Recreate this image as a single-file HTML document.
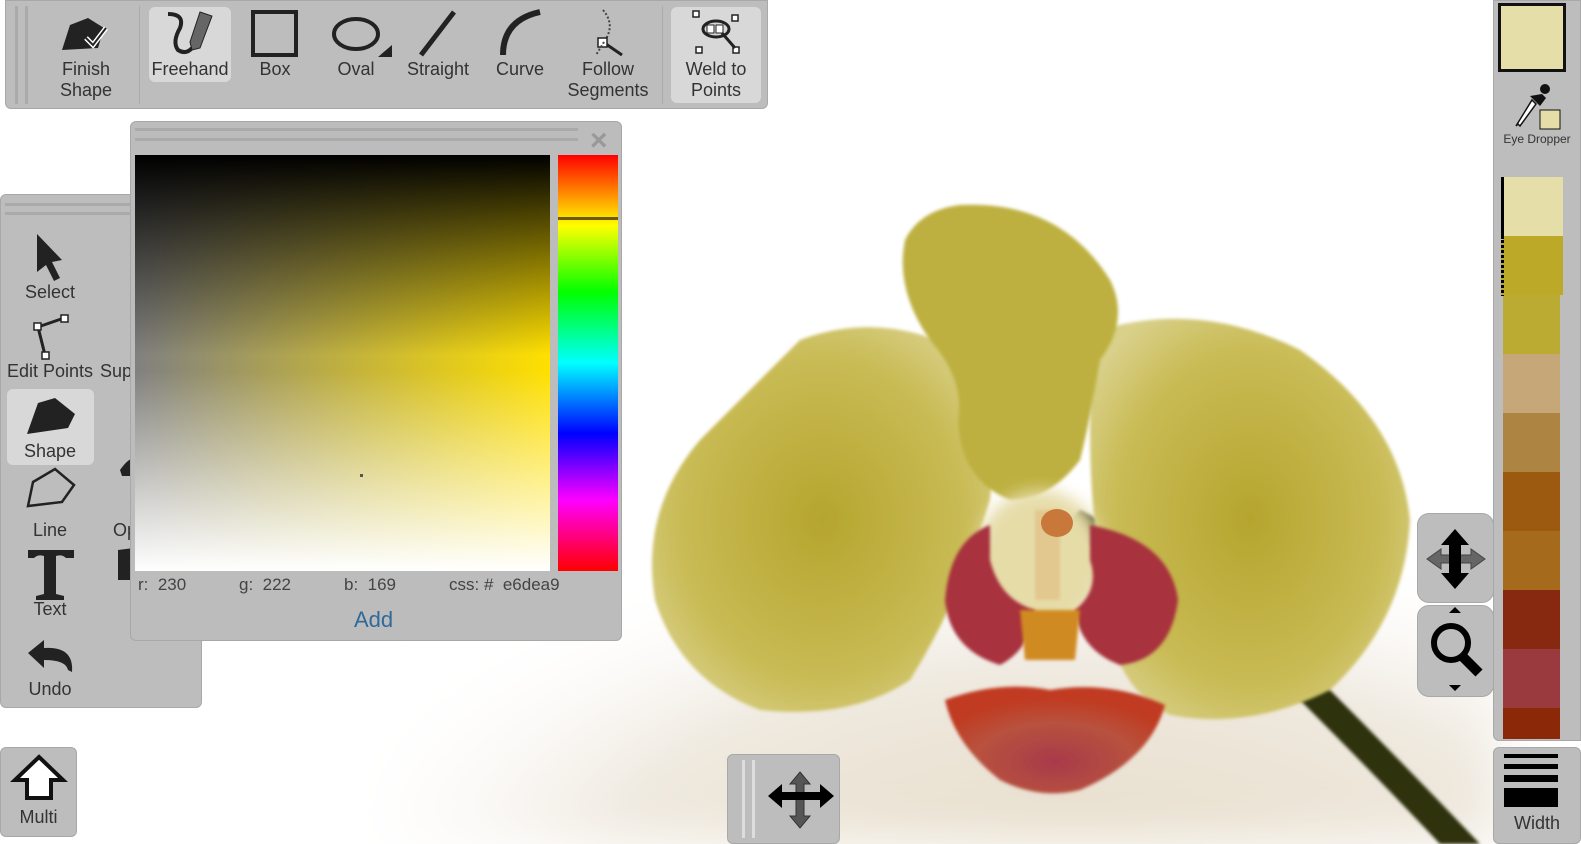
<!DOCTYPE html>
<html><head><meta charset="utf-8">
<style>
*{box-sizing:border-box;margin:0;padding:0}
html,body{width:1581px;height:844px;overflow:hidden}
body{position:relative;background:#fff;font-family:"Liberation Sans",Arial,sans-serif;color:#333}
.abs{position:absolute}
.panel{position:absolute;background:#bdbdbd;border:1px solid #a8a8a8;border-radius:6px}
.btn{position:absolute;text-align:center;font-size:18px;color:#333;line-height:21px}
.hl{background:#d8d8d8;border-radius:6px}
.grip{position:absolute;background:#aaa}
</style></head><body>
<svg class="abs" style="left:0;top:0" width="1581" height="844">
<defs>
<radialGradient id="bg" cx="0.62" cy="1.05" r="0.7">
<stop offset="0" stop-color="#e6dcc8"/><stop offset="0.6" stop-color="#efe9df"/><stop offset="1" stop-color="#fff" stop-opacity="0"/></radialGradient>
<filter id="b8"><feGaussianBlur stdDeviation="8"/></filter>
<filter id="b2"><feGaussianBlur stdDeviation="1.5"/></filter>
<filter id="b20"><feGaussianBlur stdDeviation="25"/></filter>
<radialGradient id="pet" cx="0.5" cy="0.5" r="0.6"><stop offset="0" stop-color="#b5a52e"/><stop offset="0.7" stop-color="#c9bb55"/><stop offset="1" stop-color="#d9d08a"/></radialGradient>
<radialGradient id="lip" cx="0.5" cy="0.7" r="0.6"><stop offset="0" stop-color="#a83a4a"/><stop offset="0.6" stop-color="#b8523e"/><stop offset="1" stop-color="#c03a20"/></radialGradient>
</defs>
<rect x="380" y="360" width="1120" height="484" fill="url(#bg)" filter="url(#b20)"/>
<path d="M1060 530 Q1200 600 1300 700 Q1380 780 1440 844 L1480 844 Q1400 760 1320 680 Q1200 570 1080 510Z" fill="#2e3010" filter="url(#b2)"/>
<path d="M800 340 Q880 310 960 350 Q1000 420 990 500 Q960 600 910 680 Q850 720 760 710 Q680 680 655 600 Q640 510 700 440 Q750 390 800 340Z" fill="url(#pet)" filter="url(#b2)"/>
<path d="M1100 330 Q1200 300 1300 350 Q1400 420 1410 520 Q1405 620 1330 690 Q1250 730 1170 715 Q1120 690 1110 630 Q1090 530 1090 430 Q1090 370 1100 330Z" fill="url(#pet)" filter="url(#b2)"/>
<path d="M960 205 Q1060 200 1110 280 Q1130 320 1100 360 Q1090 420 1080 460 Q1050 500 1010 500 Q960 480 958 420 Q965 380 930 340 Q895 290 905 240 Q920 210 960 205Z" fill="#bdb040" filter="url(#b2)"/>
<ellipse cx="1040" cy="560" rx="65" ry="70" fill="#e6dca8" filter="url(#b8)"/>
<path d="M990 525 Q950 540 945 600 Q950 650 1000 665 Q1030 650 1035 610 Q1000 600 990 560Z" fill="#a8333e" filter="url(#b2)"/>
<path d="M1090 525 Q1170 540 1178 600 Q1170 660 1120 665 Q1080 650 1075 610 Q1100 590 1090 560Z" fill="#a8333e" filter="url(#b2)"/>
<path d="M1035 510 L1060 510 L1060 600 L1035 600Z" fill="#e2c88e" filter="url(#b2)"/>
<ellipse cx="1057" cy="523" rx="16" ry="14" fill="#c8783a"/>
<path d="M1020 610 L1080 610 L1075 660 L1025 660Z" fill="#d08a20" filter="url(#b2)"/>
<path d="M945 700 Q1000 680 1050 690 Q1110 680 1165 705 Q1150 760 1080 790 Q1040 800 1000 780 Q955 745 945 700Z" fill="url(#lip)" filter="url(#b2)"/>
</svg>

<div class="panel" style="left:5px;top:0;width:763px;height:109px;border-radius:0 0 6px 6px"></div>
<div class="grip" style="left:15px;top:6px;width:3px;height:98px"></div>
<div class="grip" style="left:25px;top:6px;width:3px;height:98px"></div>
<div class="abs" style="left:139px;top:6px;width:1px;height:98px;background:#aaa"></div>
<div class="abs" style="left:662px;top:6px;width:1px;height:98px;background:#aaa"></div>
<div class="abs hl" style="left:149px;top:7px;width:82px;height:75px"></div>
<div class="abs hl" style="left:671px;top:7px;width:90px;height:96px"></div>
<svg class="abs" style="left:0;top:0" width="770" height="60">
<path d="M70 25 L88 18 L104 28 L98 48 L62 50Z" fill="#222"/><path d="M86 38 L93 45 L106 28" stroke="#fff" stroke-width="5" fill="none"/><path d="M86 38 L93 45 L106 28" stroke="#222" stroke-width="2" fill="none"/>
<path d="M168 14 Q185 14 180 28 Q172 42 178 50 Q186 55 192 48" stroke="#222" stroke-width="4" fill="none"/><path d="M200 12 L212 16 L200 48 L192 50 L190 42Z" fill="#666" stroke="#222" stroke-width="1"/>
<rect x="253" y="12" width="43" height="43" fill="none" stroke="#222" stroke-width="4"/>
<ellipse cx="356" cy="34" rx="22" ry="15" fill="none" stroke="#222" stroke-width="4"/><path d="M378 57 L392 45 L392 57Z" fill="#222"/>
<path d="M421 55 L454 12" stroke="#222" stroke-width="5"/>
<path d="M503 55 Q503 20 540 12" stroke="#222" stroke-width="6" fill="none"/>
<path d="M603 10 Q616 25 604 42" stroke="#444" stroke-width="2" stroke-dasharray="2 2" fill="none"/><path d="M603 42 L622 55" stroke="#222" stroke-width="3"/><rect x="598" y="38" width="9" height="9" fill="#fff" stroke="#222" stroke-width="1.5"/><path d="M604 42 L596 55" stroke="#444" stroke-width="2" stroke-dasharray="2 2"/>
<rect x="693" y="11" width="6" height="6" fill="#fff" stroke="#222" stroke-width="1.5"/><rect x="732" y="15" width="6" height="6" fill="#fff" stroke="#222" stroke-width="1.5"/><rect x="696" y="47" width="6" height="6" fill="#fff" stroke="#222" stroke-width="1.5"/><rect x="733" y="47" width="6" height="6" fill="#fff" stroke="#222" stroke-width="1.5"/>
<ellipse cx="716" cy="29" rx="13" ry="8" fill="none" stroke="#222" stroke-width="3"/><rect x="707" y="25" width="7" height="8" fill="#fff" stroke="#222"/><rect x="716" y="25" width="7" height="8" fill="#fff" stroke="#222"/><path d="M722 33 L735 48" stroke="#222" stroke-width="3"/>
</svg>
<div class="btn" style="left:40px;top:59px;width:92px">Finish<br>Shape</div>
<div class="btn" style="left:149px;top:59px;width:82px">Freehand</div>
<div class="btn" style="left:245px;top:59px;width:60px">Box</div>
<div class="btn" style="left:326px;top:59px;width:60px">Oval</div>
<div class="btn" style="left:400px;top:59px;width:76px">Straight</div>
<div class="btn" style="left:490px;top:59px;width:60px">Curve</div>
<div class="btn" style="left:560px;top:59px;width:96px">Follow<br>Segments</div>
<div class="btn" style="left:671px;top:59px;width:90px">Weld to<br>Points</div>

<div class="panel" style="left:0;top:194px;width:202px;height:514px"></div>
<div class="grip" style="left:5px;top:203px;width:125px;height:3px"></div>
<div class="grip" style="left:5px;top:212px;width:125px;height:3px"></div>
<div class="abs hl" style="left:7px;top:389px;width:87px;height:76px"></div>
<svg class="abs" style="left:0;top:220px" width="140" height="460">
<path d="M37 14 L62 40 L52 42 L60 58 L54 61 L46 45 L37 52Z" fill="#222"/>
<path d="M38 107 L64 98 M38 107 L45 135" stroke="#222" stroke-width="3"/><rect x="34" y="103" width="7" height="7" fill="#fff" stroke="#222" stroke-width="1.5"/><rect x="61" y="95" width="7" height="7" fill="#fff" stroke="#222" stroke-width="1.5"/><rect x="42" y="132" width="7" height="7" fill="#fff" stroke="#222" stroke-width="1.5"/>
<path d="M38 183 L55 178 L75 194 L68 208 L27 214Z" fill="#222"/>
<path d="M33 262 L55 249 L74 265 L62 282 L28 286Z" fill="none" stroke="#222" stroke-width="2.5"/>
<path d="M28 330 L74 330 L74 338 L66 338 Q62 334 56 336 L56 374 L64 376 L64 380 L36 380 L36 376 L44 374 L44 336 Q38 334 34 338 L28 338Z" fill="#222"/>
<path d="M28 433 L44 420 L44 428 Q74 426 72 452 L68 450 Q66 440 44 440 L44 448Z" fill="#222"/>
<path d="M120 250 Q130 236 134 240 L134 256 L122 256Z M118 330 L134 328 L134 360 L118 360Z" fill="#222"/>
</svg>
<div class="btn" style="left:0;top:282px;width:100px">Select</div>
<div class="btn" style="left:0;top:361px;width:100px">Edit Points</div>
<div class="btn" style="left:0;top:441px;width:100px">Shape</div>
<div class="btn" style="left:0;top:520px;width:100px">Line</div>
<div class="btn" style="left:0;top:599px;width:100px">Text</div>
<div class="btn" style="left:0;top:679px;width:100px">Undo</div>
<div class="btn" style="left:100px;top:361px;">Sup</div>
<div class="btn" style="left:113px;top:520px;">Op</div>

<div class="panel" style="left:130px;top:121px;width:492px;height:520px;background:#bcbcbc"></div>
<div class="grip" style="left:135px;top:128px;width:443px;height:3px"></div>
<div class="grip" style="left:135px;top:138px;width:443px;height:3px"></div>
<div class="abs" style="left:590px;top:124px;font-size:30px;color:#999;font-weight:bold">×</div>
<div class="abs" style="left:135px;top:155px;width:415px;height:416px;background:linear-gradient(to right,#808080,#ffe000)"></div>
<div class="abs" style="left:135px;top:155px;width:415px;height:416px;background:linear-gradient(to bottom,#000 0%,rgba(0,0,0,0) 48%,rgba(255,255,255,0) 52%,#fff 100%)"></div>
<div class="abs" style="left:360px;top:474px;width:3px;height:3px;background:#555"></div>
<div class="abs" style="left:558px;top:155px;width:60px;height:416px;background:linear-gradient(to bottom,#f00 0%,#ff0 17%,#0f0 33%,#0ff 50%,#00f 67%,#f0f 83%,#f00 100%)"></div>
<div class="abs" style="left:558px;top:217px;width:60px;height:3px;background:#6a5a00"></div>
<div class="abs" style="left:138px;top:575px;font-size:17px;color:#444;white-space:pre">r:  230</div>
<div class="abs" style="left:239px;top:575px;font-size:17px;color:#444;white-space:pre">g:  222</div>
<div class="abs" style="left:344px;top:575px;font-size:17px;color:#444;white-space:pre">b:  169</div>
<div class="abs" style="left:449px;top:575px;font-size:17px;color:#444;white-space:pre">css: #  e6dea9</div>
<div class="abs" style="left:354px;top:607px;font-size:22px;color:#2f6a9a">Add</div>

<div class="panel" style="left:0;top:747px;width:77px;height:90px"></div>
<svg class="abs" style="left:10px;top:754px" width="60" height="50"><path d="M29 3 L53 26 L41 26 L41 44 L17 44 L17 26 L5 26Z" fill="#fff" stroke="#111" stroke-width="4"/></svg>
<div class="btn" style="left:0;top:807px;width:77px">Multi</div>

<div class="panel" style="left:727px;top:754px;width:113px;height:90px"></div>
<div class="grip" style="left:742px;top:760px;width:3px;height:78px;background:#ddd"></div>
<div class="grip" style="left:752px;top:760px;width:3px;height:78px;background:#ddd"></div>
<svg class="abs" style="left:766px;top:770px" width="72" height="60">
<path d="M34 2 L44 14 L38 14 L38 46 L44 46 L34 58 L24 46 L30 46 L30 14 L24 14Z" fill="#555" stroke="#333"/>
<path d="M2 26 L16 14 L16 22 L54 22 L54 14 L68 26 L54 38 L54 30 L16 30 L16 38Z" fill="#000"/>
</svg>

<div class="panel" style="left:1417px;top:513px;width:77px;height:90px;border-radius:12px"></div>
<div class="panel" style="left:1417px;top:605px;width:77px;height:92px;border-radius:12px"></div>
<svg class="abs" style="left:1417px;top:513px" width="77" height="184">
<path d="M10 46 L24 36 L24 42 L54 42 L54 36 L68 46 L54 56 L54 50 L24 50 L24 56Z" fill="#666" stroke="#444"/>
<path d="M38 16 L52 32 L44 32 L44 60 L52 60 L38 76 L24 60 L32 60 L32 32 L24 32Z" fill="#000"/>
<path d="M32 100 L38 94 L44 100Z M32 172 L44 172 L38 178Z" fill="#000"/>
<circle cx="34" cy="130" r="17" fill="none" stroke="#000" stroke-width="6"/><path d="M45 143 L62 160" stroke="#000" stroke-width="10"/>
</svg>

<div class="panel" style="left:1493px;top:0;width:88px;height:741px;border-radius:0 0 0 6px"></div>
<div class="abs" style="left:1498px;top:3px;width:68px;height:69px;border:3px solid #111;background:#e6dea9"></div>
<svg class="abs" style="left:1510px;top:76px" width="55" height="56">
<path d="M8 48 L6 50 L22 24 L26 28 L10 50Z" fill="#fff" stroke="#111" stroke-width="1.5"/><path d="M20 20 L30 30 L36 22 L32 18Z" fill="#111"/><circle cx="35" cy="13" r="5" fill="#111"/>
<rect x="30" y="34" width="20" height="19" fill="#e6dea9" stroke="#111"/>
</svg>
<div class="abs" style="left:1493px;top:132px;width:88px;text-align:center;font-size:12px;color:#333">Eye Dropper</div>
<div class="abs" style="left:1503px;top:177px;width:60px">
<div style="height:59px;background:#e6dea9"></div>
<div style="height:59px;background:#bca927"></div>
<div style="height:59px;background:#bcab32;width:57px"></div>
<div style="height:59px;background:#c6a878;width:57px"></div>
<div style="height:59px;background:#ae8442;width:57px"></div>
<div style="height:59px;background:#9b5a10;width:57px"></div>
<div style="height:59px;background:#a56a1b;width:57px"></div>
<div style="height:59px;background:#872811;width:57px"></div>
<div style="height:59px;background:#9a3a3e;width:57px"></div>
<div style="height:31px;background:#8a2808;width:57px"></div>
</div>
<div class="abs" style="left:1501px;top:177px;width:3px;height:62px;background:#000"></div>
<div class="abs" style="left:1501px;top:240px;width:3px;height:56px;background:repeating-linear-gradient(#000 0 3px,#bca927 3px 5px)"></div>
<div class="panel" style="left:1493px;top:747px;width:88px;height:97px"></div>
<div class="abs" style="left:1504px;top:754px;width:54px;height:4px;background:#000"></div>
<div class="abs" style="left:1504px;top:764px;width:54px;height:5px;background:#000"></div>
<div class="abs" style="left:1504px;top:775px;width:54px;height:7px;background:#000"></div>
<div class="abs" style="left:1504px;top:788px;width:54px;height:19px;background:#000"></div>
<div class="abs" style="left:1493px;top:813px;width:88px;text-align:center;font-size:18px;color:#333">Width</div>
</body></html>
